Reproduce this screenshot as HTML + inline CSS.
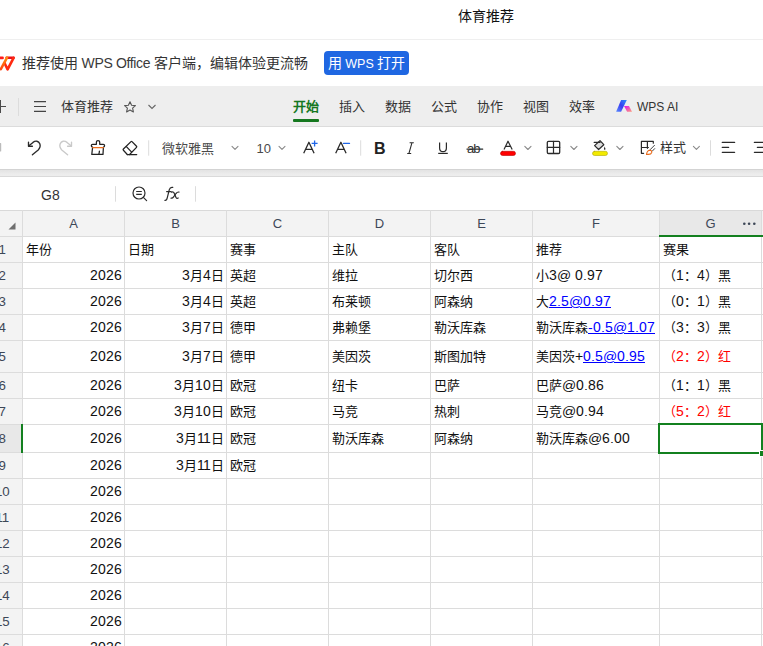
<!DOCTYPE html>
<html lang="zh-CN"><head><meta charset="utf-8">
<style>
@font-face{font-family:"LibS";src:local("Liberation Sans");size-adjust:108%}
*{margin:0;padding:0;box-sizing:border-box}
html,body{width:763px;height:646px;overflow:hidden;background:#fff}
body{position:relative;font-family:"Liberation Sans",sans-serif;color:#222}
.a{position:absolute;white-space:nowrap}
#title{left:458px;top:7px;font-size:14px;line-height:18px;color:#111}
#tline{left:0;top:39px;width:763px;height:1px;background:#efefef}
#banner-text{left:22px;top:54px;font-size:14px;line-height:18px;color:#333}
#btn{left:324px;top:51px;width:85px;height:24px;background:#1f67e2;border-radius:4px;color:#fff;font-size:14px;line-height:24px;text-align:center}
#tabbar{left:0;top:86px;width:763px;height:40px;background:#eeeeee}
.tab{font-size:13px;line-height:17px;color:#333;top:98px}
#toolbar{left:0;top:126px;width:763px;height:43px;background:#fff;border-top:1px solid #dcdcdc}
#band{left:0;top:169px;width:763px;height:8px;background:linear-gradient(#d3d3d3 0,#d3d3d3 1px,#e3e3e3 1px,#ececec 5px,#ededed 7px,#dadada 7px)}
#fbar{left:0;top:177px;width:763px;height:33px;background:#fff}
.sep{width:1px;background:#dedede}
.tb{font-size:13px;line-height:17px;color:#444}
#grid{left:0;top:210px}
.hl{position:absolute;background:#dcdcdc;height:1px}
.vl{position:absolute;background:#dcdcdc;width:1px}
.ch{font-size:13px;color:#3d4757;text-align:center;line-height:26px;top:210px;padding-top:1px}
.rn{font-size:13.3px;color:#3d4757;line-height:26px;padding-top:1px}
.c{font-size:13px;line-height:26px;color:#111;font-family:"LibS","Liberation Sans",sans-serif}
.r{text-align:right}
.lnk{color:#0000ff;text-decoration:underline}
.red{color:#f00}
</style></head>
<body>
<div class="a" id="title">体育推荐</div>
<div class="a" id="tline"></div>

<!-- WPS logo -->
<svg class="a" style="left:0;top:54px" width="16" height="18" viewBox="0 0 16 18">
  <defs><linearGradient id="lg1" x1="0" y1="1" x2="0" y2="0"><stop offset="0" stop-color="#ff4a10"/><stop offset="1" stop-color="#ff8a10"/></linearGradient></defs>
  <path d="M-3 3.9 H2.6" stroke="#ff1a1a" stroke-width="2.6" stroke-linecap="round"/>
  <path d="M6.6 3.8 H13.6" stroke="#e8101a" stroke-width="2.6" stroke-linecap="round"/>
  <path d="M13.6 3.8 L7.6 15.4 L4.6 9.2" fill="none" stroke="#ff2a10" stroke-width="2.6" stroke-linecap="round" stroke-linejoin="round"/>
  <path d="M7 3.6 L0.8 15.2" stroke="url(#lg1)" stroke-width="2.6" stroke-linecap="round"/>
</svg>
<div class="a" id="banner-text">推荐使用<span style="font-size:14px;letter-spacing:-0.35px;color:#3a3a3a"> WPS Office </span>客户端，编辑体验更流畅</div>
<div class="a" id="btn">用<span style="font-size:12.5px"> WPS </span>打开</div>

<div class="a" id="tabbar"></div>
<div class="a" style="left:0;top:99px;width:6px;height:14px;overflow:hidden">
  <div style="position:absolute;left:-6px;top:6.5px;width:13px;height:1.4px;background:#4a4a4a"></div>
  <div style="position:absolute;left:-0.2px;top:0.7px;width:1.2px;height:13px;background:#4a4a4a"></div>
</div>
<div class="a sep" style="left:18px;top:98px;height:18px;background:#dcdcdc"></div>
<svg class="a" style="left:34px;top:101px" width="12" height="11"><path d="M0 0.6H12M0 5.5H12M0 10.4H12" stroke="#444" stroke-width="1.1"/></svg>
<div class="a tab" style="left:61px;top:98px">体育推荐</div>
<svg class="a" style="left:123px;top:101px" width="14" height="12" viewBox="0 0 14 12"><path d="M7 0.8 L8.6 4.2 L12.4 4.6 L9.6 7.1 L10.4 10.9 L7 9 L3.6 10.9 L4.4 7.1 L1.6 4.6 L5.4 4.2 Z" fill="none" stroke="#555" stroke-width="1.1" stroke-linejoin="round"/></svg>
<svg class="a" style="left:148px;top:104px" width="8" height="6"><path d="M0.5 1 L4 4.5 L7.5 1" fill="none" stroke="#666" stroke-width="1.1"/></svg>

<div class="a tab" style="left:293px;color:#15781f;font-weight:bold">开始</div>
<div class="a" style="left:293px;top:119px;width:26px;height:2.5px;background:#15781f;border-radius:1px"></div>
<div class="a tab" style="left:339px">插入</div>
<div class="a tab" style="left:385px">数据</div>
<div class="a tab" style="left:431px">公式</div>
<div class="a tab" style="left:477px">协作</div>
<div class="a tab" style="left:523px">视图</div>
<div class="a tab" style="left:569px">效率</div>
<svg class="a" style="left:612px;top:96px" width="24" height="20" viewBox="0 0 24 20">
  <defs>
    <linearGradient id="ai1" x1="1" y1="0" x2="0" y2="1"><stop offset="0" stop-color="#2a92ff"/><stop offset="0.5" stop-color="#3a3df0"/><stop offset="1" stop-color="#5a8cff"/></linearGradient>
    <linearGradient id="ai2" x1="0" y1="0" x2="1" y2="1"><stop offset="0" stop-color="#e010f0"/><stop offset="1" stop-color="#ff9e7a"/></linearGradient>
  </defs>
  <path d="M9.1 4.1 H14.8 L9.1 15.7 H4.1 Z" fill="url(#ai1)"/>
  <path d="M12 9.9 H17 L20 15.7 H15.1 Z" fill="url(#ai2)"/>
</svg>
<div class="a" style="left:637px;top:100px;font-size:12px;line-height:15px;color:#333">WPS AI</div>

<div class="a" id="toolbar"></div>
<div class="a" id="band"></div>
<div class="a" id="fbar"></div>

<!-- toolbar icons -->
<svg class="a" style="left:0;top:0" width="763" height="210" viewBox="0 0 763 210" fill="none" stroke-linecap="round" stroke-linejoin="round">
 <!-- partial icon at left edge -->
 <path d="M-3 143.5 H0.6 V151" stroke="#bbb" stroke-width="1.2"/>
 <!-- undo -->
 <path d="M28.5 142.2 V146.2 H32.4" stroke="#2b2b2b" stroke-width="1.35"/>
 <path d="M28.9 145.8 L33 142.4 C35.6 140.4 38.6 140.9 39.8 143.8 C40.7 146.2 39.8 148.3 38.2 149.9 L32.4 154.7" stroke="#2b2b2b" stroke-width="1.35"/>
 <!-- redo -->
 <g transform="translate(100,0) scale(-1,1)">
 <path d="M28.5 142.2 V146.2 H32.4" stroke="#c9c9c9" stroke-width="1.35"/>
 <path d="M28.9 145.8 L33 142.4 C35.6 140.4 38.6 140.9 39.8 143.8 C40.7 146.2 39.8 148.3 38.2 149.9 L32.4 154.7" stroke="#c9c9c9" stroke-width="1.35"/>
 </g>
 <!-- format painter -->
 <g transform="translate(88,137)" stroke="#222" stroke-width="1.25">
  <path d="M8.4 7.3 V5 C8.4 4 9 3.7 10 3.7 C11 3.7 11.7 4 11.7 5 V7.3 H15.3 C16.4 7.3 16.6 8 16.6 8.7 C16.6 9.6 16.1 10 15.4 10.2 L15 17.4 H3.8 L4.6 10.2 C3.8 10 3.3 9.6 3.3 8.7 C3.3 8 3.6 7.3 4.6 7.3 Z"/>
  <path d="M11.4 14 C11.4 15.4 11.1 16.5 10.8 17.4"/>
  <path d="M4.7 10.6 H15.3" stroke="#ee7020" stroke-width="1.3"/>
 </g>
 <!-- eraser -->
 <g transform="translate(119,137)" stroke="#222" stroke-width="1.25">
  <path d="M8.3 17.5 L4.4 13.3 C4 12.9 4 12.4 4.4 12 L12 4.6 C12.3 4.3 12.7 4.3 13 4.6 L17.5 9.3 C17.8 9.6 17.8 10.1 17.5 10.4 L10.6 17.5"/>
  <path d="M8.3 17.5 H17.7"/>
  <path d="M7.4 9.6 L12.4 14.9"/>
 </g>
 <!-- chevrons -->
 <g stroke="#8a8a8a" stroke-width="1.1">
  <path d="M232 146.4 L235 149.4 L238 146.4"/>
  <path d="M279 146.4 L282 149.4 L285 146.4"/>
  <path d="M524.8 146.4 L527.9 149.5 L531 146.4"/>
  <path d="M570.8 146.4 L573.9 149.5 L577 146.4"/>
  <path d="M616.8 146.4 L619.9 149.5 L623 146.4"/>
  <path d="M693.4 146.4 L696.4 149.4 L699.4 146.4"/>
 </g>
 <!-- A+ -->
 <path d="M303.7 153.3 L308.9 142.3 L314.1 153.3 M305.9 149.4 H311.9" stroke="#2a2a2a" stroke-width="1.3" stroke-linecap="butt"/>
 <path d="M311.6 143.3 H317.6 M314.6 140.4 V146.4" stroke="#1f66e8" stroke-width="1.3" stroke-linecap="butt"/>
 <!-- A- -->
 <path d="M335.7 153.3 L340.9 142.3 L346.1 153.3 M337.9 149.4 H343.9" stroke="#2a2a2a" stroke-width="1.3" stroke-linecap="butt"/>
 <path d="M343.5 143.4 H349.5" stroke="#1f66e8" stroke-width="1.3"/>
 <!-- I italic -->
 <path d="M409.6 142.7 H413.8 M412 142.7 L408.9 153.5 M407.2 153.5 H411.2" stroke="#2a2a2a" stroke-width="1.05" stroke-linecap="butt"/>
 <!-- U -->
 <path d="M439.6 142.4 V148 C439.6 150.6 441 151.7 443 151.7 C445 151.7 446.4 150.6 446.4 148 V142.4" stroke="#2a2a2a" stroke-width="1.2" stroke-linecap="butt"/>
 <path d="M438.2 153.4 H447.8" stroke="#2a2a2a" stroke-width="1.2" stroke-linecap="butt"/>
 <!-- strike -->
 <path d="M466.9 149.1 H482.8" stroke="#2a2a2a" stroke-width="1.1"/>
 <!-- font color -->
 <path d="M504 149.5 L508 141.2 L512.2 149.5 M505.4 146.3 H510.6" stroke="#2a2a2a" stroke-width="1.2" stroke-linecap="butt"/>
 <rect x="500.5" y="151.3" width="15" height="4.2" rx="2.1" fill="#ff0000" stroke="#b80000" stroke-width="0.6"/>
 <!-- borders -->
 <rect x="547.3" y="141.3" width="12.4" height="12.2" rx="1.2" stroke="#2a2a2a" stroke-width="1.3"/>
 <path d="M553.5 141.3 V153.5 M547.3 147.4 H559.7" stroke="#2a2a2a" stroke-width="1.2"/>
 <!-- fill -->
 <path d="M600 140.6 L603.8 144.7 L598.6 149.5 L594.6 145.6 Z" fill="#dedede" stroke="#2a2a2a" stroke-width="1.2"/>
 <path d="M594.2 142.4 H600" stroke="#2a2a2a" stroke-width="1.2"/>
 <path d="M604.7 146.4 L605.4 148.4 C605.6 149.3 605.2 149.8 604.7 149.8 C604.2 149.8 603.8 149.3 604 148.4 Z" fill="#2a2a2a" stroke="none"/>
 <rect x="592.5" y="151.3" width="15" height="4.2" rx="2.1" fill="#f2ea00" stroke="#b0a800" stroke-width="0.6"/>
 <!-- style icon -->
 <path d="M643.6 153.3 H641.4 V141.4 H653.3 V143.2 M641.4 147.5 H648.4 M647.4 141.4 V148.3" stroke="#2a2a2a" stroke-width="1.2"/>
 <path d="M654.5 145.3 L650.2 149.6 M654.7 148.6 L652.4 151" stroke="#444" stroke-width="1"/>
 <path d="M646.5 154.4 C646.8 152 648 150.4 650 150.3 C651.3 150.3 652 151.3 651.7 152.5 C651.3 153.8 650 154.4 648.5 154.4 Z" stroke="#e86a1a" stroke-width="1.1"/>
 <!-- align -->
 <path d="M722.3 142.4 H734.6 M722.3 147.4 H728.6 M722.3 152.3 H734.6" stroke="#2a2a2a" stroke-width="1.3"/>
 <path d="M754.4 142.4 H770 M757.4 147.4 H770 M754.4 152.3 H770" stroke="#2a2a2a" stroke-width="1.3"/>
 <!-- separators -->
 <path d="M148.7 140.3 V155.7 M360.7 140.3 V155.7 M710.5 140.3 V155.7" stroke="#dcdcdc" stroke-width="1" stroke-linecap="butt"/>
 <!-- formula bar -->
 <path d="M115.5 186.2 V201.7 M195.5 186.2 V201.7" stroke="#dcdcdc" stroke-width="1" stroke-linecap="butt"/>
 <circle cx="139" cy="193" r="6" stroke="#2a2a2a" stroke-width="1.2"/>
 <path d="M136.2 191.5 H141.8 M136.2 194.4 H141.8" stroke="#2a2a2a" stroke-width="1.2" stroke-linecap="butt"/>
 <path d="M143.6 197.6 L146.6 200.6" stroke="#2a2a2a" stroke-width="1.2"/>
 <path d="M164.9 200.4 C166.2 200.6 166.9 199.6 167.3 197.6 L169.3 189.6 C169.8 187.9 170.9 187 172.8 187.4" stroke="#2a2a2a" stroke-width="1.2"/>
 <path d="M166.6 191.6 H171.2" stroke="#2a2a2a" stroke-width="1.1"/>
 <path d="M171.6 192.2 C172.6 191.6 173.6 191.9 174.1 193.1 L176 197.4 C176.5 198.5 177.4 198.6 178.2 198" stroke="#2a2a2a" stroke-width="1.2"/>
 <path d="M179 192.1 C178 191.8 177 192.3 176 193.5 L173.6 196.9 C172.9 197.9 172 198.4 171 198.1" stroke="#2a2a2a" stroke-width="1.2"/>
</svg>
<div class="a tb" style="left:162px;top:140px;color:#4a4a4a">微软雅黑</div>
<div class="a tb" style="left:256.5px;top:140px;color:#4a4a4a">10</div>
<div class="a" style="left:374px;top:139px;font-size:16px;line-height:20px;font-weight:bold;color:#222">B</div>
<div class="a" style="left:467px;top:140px;font-size:13px;line-height:17px;color:#333;letter-spacing:-1px">ab</div>
<div class="a tb" style="left:660px;top:139px;color:#333">样式</div>

<!-- formula bar -->
<div class="a" style="left:41px;top:186px;font-size:14px;line-height:18px;color:#333">G8</div>

<!-- grid -->
<div class="a" style="left:0;top:210px;width:763px;height:26px;background:#f3f3f3"></div>
<div class="a" style="left:0;top:236px;width:22px;height:410px;background:#f3f3f3"></div>
<div class="a" style="left:659px;top:210px;width:102px;height:26px;background:#e8e8e8"></div>
<div class="a" style="left:0;top:424px;width:22px;height:28px;background:#e8e8e8"></div>
<svg class="a" style="left:8px;top:222px" width="8" height="8"><path d="M7.5 0.5 V7.5 H0.5 Z" fill="#6f6f6f"/></svg>

<div id="lines">
<div class="hl" style="left:0;top:210px;width:763px;background:#d9d9d9"></div>
<div class="hl" style="left:0;top:236px;width:763px"></div>
<div class="hl" style="left:0;top:262px;width:763px"></div>
<div class="hl" style="left:0;top:288px;width:763px"></div>
<div class="hl" style="left:0;top:314px;width:763px"></div>
<div class="hl" style="left:0;top:340px;width:763px"></div>
<div class="hl" style="left:0;top:372px;width:763px"></div>
<div class="hl" style="left:0;top:398px;width:763px"></div>
<div class="hl" style="left:0;top:424px;width:763px"></div>
<div class="hl" style="left:0;top:452px;width:763px"></div>
<div class="hl" style="left:0;top:478px;width:763px"></div>
<div class="hl" style="left:0;top:504px;width:763px"></div>
<div class="hl" style="left:0;top:530px;width:763px"></div>
<div class="hl" style="left:0;top:556px;width:763px"></div>
<div class="hl" style="left:0;top:582px;width:763px"></div>
<div class="hl" style="left:0;top:608px;width:763px"></div>
<div class="hl" style="left:0;top:634px;width:763px"></div>
<div class="vl" style="left:22px;top:210px;height:436px"></div>
<div class="vl" style="left:124px;top:210px;height:436px"></div>
<div class="vl" style="left:226px;top:210px;height:436px"></div>
<div class="vl" style="left:328px;top:210px;height:436px"></div>
<div class="vl" style="left:430px;top:210px;height:436px"></div>
<div class="vl" style="left:532px;top:210px;height:436px"></div>
<div class="vl" style="left:659px;top:210px;height:436px"></div>
<div class="vl" style="left:761px;top:210px;height:436px"></div>
<div class="a ch" style="left:23px;width:101px">A</div>
<div class="a ch" style="left:125px;width:101px">B</div>
<div class="a ch" style="left:227px;width:101px">C</div>
<div class="a ch" style="left:329px;width:101px">D</div>
<div class="a ch" style="left:431px;width:101px">E</div>
<div class="a ch" style="left:533px;width:126px">F</div>
<div class="a ch" style="left:660px;width:101px">G</div>
<svg class="a" style="left:743px;top:222px" width="13" height="4"><circle cx="1.3" cy="1.7" r="1.3" fill="#3d4757"/><circle cx="6.1" cy="1.7" r="1.3" fill="#3d4757"/><circle cx="11.3" cy="1.7" r="1.3" fill="#3d4757"/></svg>
<div class="a" style="left:659px;top:235px;width:104px;height:2px;background:#13801f"></div>
<div class="a rn" style="left:-27.7px;width:60px;text-align:center;top:236px;line-height:26px">1</div>
<div class="a rn" style="left:-27.7px;width:60px;text-align:center;top:262px;line-height:26px">2</div>
<div class="a rn" style="left:-27.7px;width:60px;text-align:center;top:288px;line-height:26px">3</div>
<div class="a rn" style="left:-27.7px;width:60px;text-align:center;top:314px;line-height:26px">4</div>
<div class="a rn" style="left:-27.7px;width:60px;text-align:center;top:340px;line-height:32px">5</div>
<div class="a rn" style="left:-27.7px;width:60px;text-align:center;top:372px;line-height:26px">6</div>
<div class="a rn" style="left:-27.7px;width:60px;text-align:center;top:398px;line-height:26px">7</div>
<div class="a rn" style="left:-27.7px;width:60px;text-align:center;top:424px;line-height:28px">8</div>
<div class="a rn" style="left:-27.7px;width:60px;text-align:center;top:452px;line-height:26px">9</div>
<div class="a rn" style="left:-27.7px;width:60px;text-align:center;top:478px;line-height:26px">10</div>
<div class="a rn" style="left:-27.7px;width:60px;text-align:center;top:504px;line-height:26px">11</div>
<div class="a rn" style="left:-27.7px;width:60px;text-align:center;top:530px;line-height:26px">12</div>
<div class="a rn" style="left:-27.7px;width:60px;text-align:center;top:556px;line-height:26px">13</div>
<div class="a rn" style="left:-27.7px;width:60px;text-align:center;top:582px;line-height:26px">14</div>
<div class="a rn" style="left:-27.7px;width:60px;text-align:center;top:608px;line-height:26px">15</div>
<div class="a rn" style="left:-27.7px;width:60px;text-align:center;top:634px;line-height:26px">16</div>
<div class="a" style="left:21px;top:424px;width:2px;height:29px;background:#13801f"></div>
<div class="a c" style="left:26px;top:236px;line-height:26px">年份</div>
<div class="a c" style="left:128px;top:236px;line-height:26px">日期</div>
<div class="a c" style="left:230px;top:236px;line-height:26px">赛事</div>
<div class="a c" style="left:332px;top:236px;line-height:26px">主队</div>
<div class="a c" style="left:434px;top:236px;line-height:26px">客队</div>
<div class="a c" style="left:536px;top:236px;line-height:26px">推荐</div>
<div class="a c" style="left:663px;top:236px;line-height:26px">赛果</div>
<div class="a c r" style="left:22px;width:100px;top:262px;line-height:26px">2026</div>
<div class="a c r" style="left:124px;width:100px;top:262px;line-height:26px">3月4日</div>
<div class="a c" style="left:230px;top:262px;line-height:26px">英超</div>
<div class="a c" style="left:332px;top:262px;line-height:26px">维拉</div>
<div class="a c" style="left:434px;top:262px;line-height:26px">切尔西</div>
<div class="a c" style="left:536px;top:262px;line-height:26px">小3@ 0.97</div>
<div class="a c" style="left:663px;top:262px;line-height:26px">（1：4）黑</div>
<div class="a c r" style="left:22px;width:100px;top:288px;line-height:26px">2026</div>
<div class="a c r" style="left:124px;width:100px;top:288px;line-height:26px">3月4日</div>
<div class="a c" style="left:230px;top:288px;line-height:26px">英超</div>
<div class="a c" style="left:332px;top:288px;line-height:26px">布莱顿</div>
<div class="a c" style="left:434px;top:288px;line-height:26px">阿森纳</div>
<div class="a c" style="left:536px;top:288px;line-height:26px">大<span class="lnk">2.5@0.97</span></div>
<div class="a c" style="left:663px;top:288px;line-height:26px">（0：1）黑</div>
<div class="a c r" style="left:22px;width:100px;top:314px;line-height:26px">2026</div>
<div class="a c r" style="left:124px;width:100px;top:314px;line-height:26px">3月7日</div>
<div class="a c" style="left:230px;top:314px;line-height:26px">德甲</div>
<div class="a c" style="left:332px;top:314px;line-height:26px">弗赖堡</div>
<div class="a c" style="left:434px;top:314px;line-height:26px">勒沃库森</div>
<div class="a c" style="left:536px;top:314px;line-height:26px">勒沃库森<span class="lnk">-0.5@1.07</span></div>
<div class="a c" style="left:663px;top:314px;line-height:26px">（3：3）黑</div>
<div class="a c r" style="left:22px;width:100px;top:340px;line-height:32px">2026</div>
<div class="a c r" style="left:124px;width:100px;top:340px;line-height:32px">3月7日</div>
<div class="a c" style="left:230px;top:340px;line-height:32px">德甲</div>
<div class="a c" style="left:332px;top:340px;line-height:32px">美因茨</div>
<div class="a c" style="left:434px;top:340px;line-height:32px">斯图加特</div>
<div class="a c" style="left:536px;top:340px;line-height:32px">美因茨+<span class="lnk">0.5@0.95</span></div>
<div class="a c" style="left:663px;top:340px;line-height:32px"><span class="red">（2：2）红</span></div>
<div class="a c r" style="left:22px;width:100px;top:372px;line-height:26px">2026</div>
<div class="a c r" style="left:124px;width:100px;top:372px;line-height:26px">3月10日</div>
<div class="a c" style="left:230px;top:372px;line-height:26px">欧冠</div>
<div class="a c" style="left:332px;top:372px;line-height:26px">纽卡</div>
<div class="a c" style="left:434px;top:372px;line-height:26px">巴萨</div>
<div class="a c" style="left:536px;top:372px;line-height:26px">巴萨@0.86</div>
<div class="a c" style="left:663px;top:372px;line-height:26px">（1：1）黑</div>
<div class="a c r" style="left:22px;width:100px;top:398px;line-height:26px">2026</div>
<div class="a c r" style="left:124px;width:100px;top:398px;line-height:26px">3月10日</div>
<div class="a c" style="left:230px;top:398px;line-height:26px">欧冠</div>
<div class="a c" style="left:332px;top:398px;line-height:26px">马竞</div>
<div class="a c" style="left:434px;top:398px;line-height:26px">热刺</div>
<div class="a c" style="left:536px;top:398px;line-height:26px">马竞@0.94</div>
<div class="a c" style="left:663px;top:398px;line-height:26px"><span class="red">（5：2）红</span></div>
<div class="a c r" style="left:22px;width:100px;top:424px;line-height:28px">2026</div>
<div class="a c r" style="left:124px;width:100px;top:424px;line-height:28px">3月11日</div>
<div class="a c" style="left:230px;top:424px;line-height:28px">欧冠</div>
<div class="a c" style="left:332px;top:424px;line-height:28px">勒沃库森</div>
<div class="a c" style="left:434px;top:424px;line-height:28px">阿森纳</div>
<div class="a c" style="left:536px;top:424px;line-height:28px">勒沃库森@6.00</div>
<div class="a c r" style="left:22px;width:100px;top:452px;line-height:26px">2026</div>
<div class="a c r" style="left:124px;width:100px;top:452px;line-height:26px">3月11日</div>
<div class="a c" style="left:230px;top:452px;line-height:26px">欧冠</div>
<div class="a c r" style="left:22px;width:100px;top:478px;line-height:26px">2026</div>
<div class="a c r" style="left:22px;width:100px;top:504px;line-height:26px">2026</div>
<div class="a c r" style="left:22px;width:100px;top:530px;line-height:26px">2026</div>
<div class="a c r" style="left:22px;width:100px;top:556px;line-height:26px">2026</div>
<div class="a c r" style="left:22px;width:100px;top:582px;line-height:26px">2026</div>
<div class="a c r" style="left:22px;width:100px;top:608px;line-height:26px">2026</div>
<div class="a c r" style="left:22px;width:100px;top:634px;line-height:26px">2026</div>
<div class="a" style="left:658px;top:423px;width:105px;height:31px;border:2px solid #13801f"></div>
<div class="a" style="left:759px;top:450px;width:6px;height:7px;background:#13801f;border:1px solid #fff"></div>
</div><!--end-->
</body></html>
